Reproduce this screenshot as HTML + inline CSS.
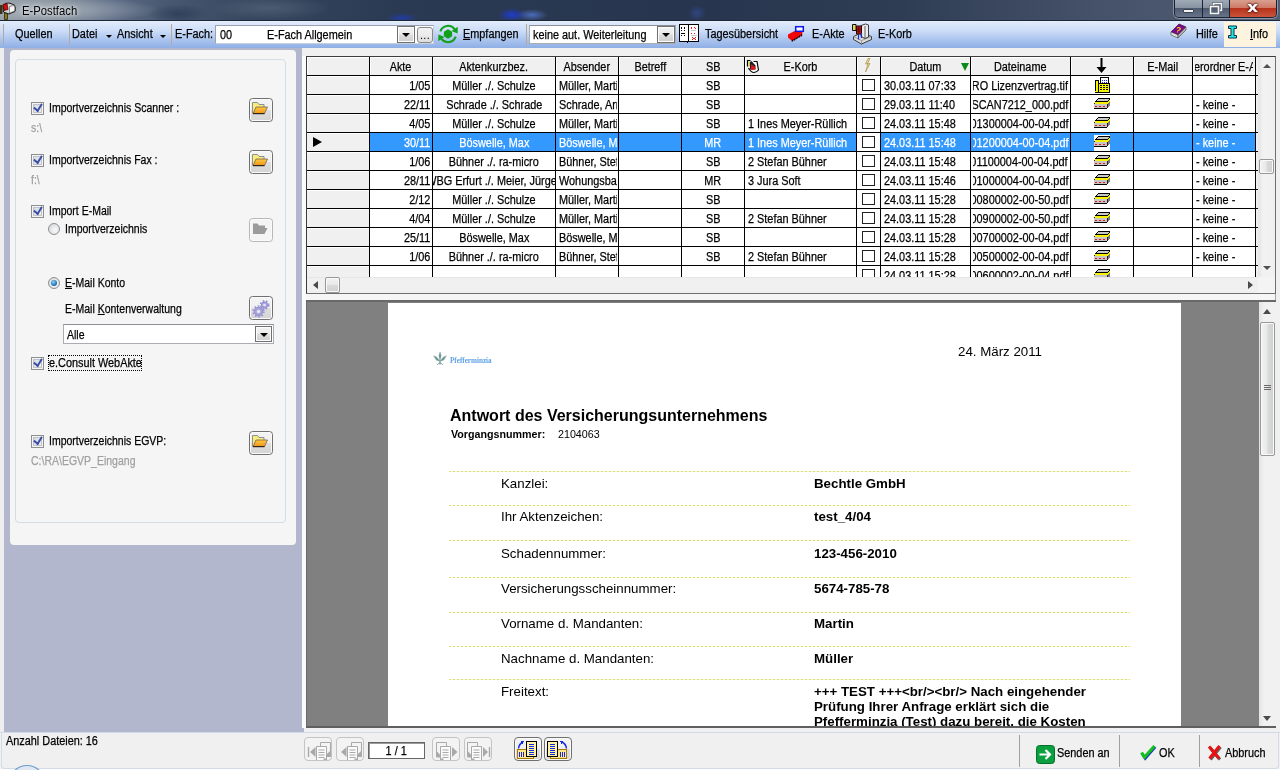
<!DOCTYPE html>
<html lang="de">
<head>
<meta charset="utf-8">
<title>E-Postfach</title>
<style>
*{box-sizing:border-box;margin:0;padding:0}
html,body{width:1280px;height:770px;overflow:hidden}
body{position:relative;background:#f0f0f0;font-family:"Liberation Sans",sans-serif;font-size:12px;color:#000;line-height:1}
.a{position:absolute}
.t{position:absolute;white-space:nowrap;line-height:14px;height:14px}
u{text-decoration:underline}
.tb{font-size:12.5px}
.s,.sc,.sr{-webkit-text-stroke:.25px currentColor}
.s{display:inline-block;transform:scaleX(.87);transform-origin:0 50%}
.sc{display:inline-block;transform:scaleX(.87);transform-origin:50% 50%}
.sr{display:inline-block;transform:scaleX(.87);transform-origin:100% 50%}
.lp{font-size:12.5px}
.lp .s{transform:scaleX(.84)}
.g{color:#a0a0a0}
.cb{width:13px;height:13px;border:1px solid #8e8f8f;background:linear-gradient(135deg,#d4d6da,#f4f4f4);box-shadow:inset 0 0 0 1px #f4f4f4,inset 0 0 0 2px #c0c4ca}
.cb:after{content:"";position:absolute;left:3px;top:-1px;width:4px;height:7px;border:solid #3a4fa8;border-width:0 2px 2px 0;transform:rotate(40deg) skewX(8deg)}
.rb{width:12px;height:12px;border-radius:50%;border:1px solid #8e8f8f;background:radial-gradient(circle at 60% 60%,#fafafa,#cfd2d6)}
.rb.on:after{content:"";position:absolute;left:2px;top:2px;width:6px;height:6px;border-radius:50%;background:radial-gradient(circle at 40% 35%,#8fd6f5,#1c76b8 60%,#0c4a86)}
.fbtn{width:24px;height:24px;border:1px solid #707070;border-radius:3.5px;background:linear-gradient(#f4f4f4 0,#efefef 48%,#dedede 52%,#d4d4d4 100%);box-shadow:inset 0 0 0 1px #fafafa}
.fbtn svg{position:absolute;left:2px;top:3px}
.fbtn.dis{border-color:#b8b8b8;background:#f4f4f4}
.gc{font-size:12.5px}
.c{text-align:center}
.hl{left:307px;width:951px;height:1px;background:#000}
.vl{top:57px;width:1px;height:220px;background:#000}
.chk{width:13px;height:12px;border:1px solid #222;background:#fff}
.pv{font-size:13.300px;line-height:16px;height:16px}
.b{font-weight:bold}
.dl{left:449px;width:681px;height:1px;background:repeating-linear-gradient(90deg,#dcdc7c 0,#dcdc7c 2.5px,#f4f4cf 2.5px,#f4f4cf 4px)}
.nb{width:28px;height:24px;border:1px solid #c4c4c4;border-radius:4px;background:#f3f3f3}
.nb svg{position:absolute;left:0;top:0}
.nb.on{border-color:#707070;background:linear-gradient(#f4f4f4 0,#efefef 48%,#dedede 52%,#d4d4d4 100%);box-shadow:inset 0 0 0 1px #fafafa}
.arr{width:0;height:0;border-left:3px solid transparent;border-right:3px solid transparent;border-top:3px solid #000}
.ddb{width:18px;height:17px;border:1px solid #707070;background:linear-gradient(#f2f2f2 0,#ebebeb 48%,#dddddd 52%,#cfcfcf 100%);box-shadow:inset 0 0 0 1px #fcfcfc}
.ddb:after{content:"";position:absolute;left:4px;top:6px;border-left:4px solid transparent;border-right:4px solid transparent;border-top:4px solid #000}
</style>
</head>
<body>
<div id="root" style="position:absolute;left:0;top:0;width:1280px;height:770px;will-change:transform;overflow:hidden">
<!-- title bar -->
<div class="a" id="titlebar" style="left:0;top:0;width:1280px;height:21px;background:
radial-gradient(ellipse 16px 5px at 402px 18px,rgba(30,60,200,.7),rgba(30,60,200,0) 100%),
radial-gradient(ellipse 14px 7px at 512px 15px,rgba(30,60,210,.95),rgba(30,60,210,0) 100%),
radial-gradient(ellipse 16px 6px at 532px 15px,rgba(90,130,230,.7),rgba(90,130,230,0) 100%),
radial-gradient(ellipse 9px 8px at 697px 13px,rgba(60,90,190,.45),rgba(60,90,190,0) 100%),
radial-gradient(ellipse 30px 10px at 178px 14px,rgba(30,45,75,.55),rgba(30,45,75,0) 100%),
radial-gradient(ellipse 60px 12px at 270px 8px,rgba(120,135,155,.35),rgba(120,135,155,0) 100%),
radial-gradient(ellipse 120px 14px at 40px 10px,rgba(175,183,191,.9),rgba(175,183,191,0) 100%),
linear-gradient(90deg,#8f99a3 0px,#7f8b98 60px,#62718a 105px,#4a5a72 160px,#36465e 250px,#2b3a53 400px,#27354e 700px,#2e3c54 900px,#45526a 1100px,#525e73 1280px)"></div>
<div class="a" style="left:0;top:20px;width:1280px;height:1px;background:#1d2738"></div>
<div class="a" style="left:0;top:21px;width:1280px;height:1px;background:#e4eefb"></div>
<div class="t" style="left:22px;top:4px;font-size:12px;color:#000;transform:scaleX(.94);transform-origin:0 0;text-shadow:0 0 6px rgba(255,255,255,.8),0 0 3px rgba(255,255,255,.5)">E-Postfach</div>
<!-- app icon -->
<svg class="a" style="left:0;top:1px" width="17" height="19" viewBox="0 0 17 19">
<path d="M0 4 h2.500 v9 h-2.500 z" fill="#3a3418"/>
<path d="M4.500 12 h3 v6.500 h-3 z" fill="#8a7a20" stroke="#2a2408" stroke-width=".8"/>
<path d="M3 4.500 Q5 1.500 9 2 L14.500 4 Q16 7 15 10.500 L9 13 L3.500 11 Z" fill="#d4d4d4" stroke="#1a1a1a" stroke-width="1"/>
<path d="M9.500 5.500 L14.300 4.500 Q15.300 7.500 14.500 10 L9.500 12 Z" fill="#f6f6f6" stroke="#555" stroke-width=".6"/>
<path d="M3 3.500 L7 2.500 L8 8.500 L4 9.500 Z" fill="#d80c0c" stroke="#3a0000" stroke-width=".7"/>
</svg>
<!-- window buttons -->
<div class="a" style="left:1174px;top:0;width:103px;height:18px;border:1px solid #1a2333;border-top:0;border-radius:0 0 5px 5px;overflow:hidden;box-shadow:0 0 0 1px rgba(255,255,255,.35)">
 <div class="a" style="left:0;top:0;width:28px;height:17px;background:linear-gradient(#a0aab6 0,#8893a2 45%,#4e5b6f 50%,#66738a 100%);border-right:1px solid #1a2333"></div>
 <div class="a" style="left:28px;top:0;width:27px;height:17px;background:linear-gradient(#a0aab6 0,#8893a2 45%,#4e5b6f 50%,#66738a 100%);border-right:1px solid #1a2333"></div>
 <div class="a" style="left:55px;top:0;width:47px;height:17px;background:linear-gradient(#d9a090 0,#cf7a66 45%,#b8321c 50%,#c9553a 100%)"></div>
 <div class="a" style="left:8px;top:9px;width:11px;height:4px;background:#f4f4f4;border:1px solid #3a4354;border-radius:1px"></div>
 <svg class="a" style="left:34px;top:2px" width="14" height="13" viewBox="0 0 14 13"><path d="M4.5 1.5h8v7h-3v-4h-5z" fill="none" stroke="#3a4354" stroke-width="2.6"/><path d="M4.5 1.5h8v7h-3v-4h-5z" fill="none" stroke="#f4f4f4" stroke-width="1.700"/><rect x="1.5" y="4.5" width="8" height="7" fill="none" stroke="#3a4354" stroke-width="2.6"/><rect x="1.5" y="4.5" width="8" height="7" fill="none" stroke="#f4f4f4" stroke-width="1.700"/></svg>
 <div class="t" style="left:72px;top:0px;font-size:14px;font-weight:bold;color:#fff;text-shadow:0 0 2px #400,0 0 2px #400;font-family:'DejaVu Sans',sans-serif;transform:scaleX(1.25);transform-origin:0 0">x</div>
</div>
<!-- toolbar -->
<div class="a" id="toolbar" style="left:0;top:22px;width:1280px;height:26px;background:linear-gradient(#dfeafb 0,#cfdff8 30%,#a9c3ee 70%,#8eafe5 100%)"></div>
<div class="a" style="left:3px;top:24px;width:1px;height:21px;background:#b5a99d"></div>
<div class="a" style="left:69px;top:24px;width:1px;height:21px;background:#b5a99d"></div>
<div class="a" style="left:171px;top:24px;width:1px;height:21px;background:#b5a99d"></div>
<div class="a" style="left:526px;top:24px;width:1px;height:21px;background:#b5a99d"></div>
<div class="t tb" style="top:27px;left:15px"><span class="s">Quellen</span></div>
<div class="t tb" style="top:27px;left:72px"><span class="s">Datei</span></div>
<div class="a arr" style="left:106px;top:35px"></div>
<div class="t tb" style="top:27px;left:117px"><span class="s">Ansicht</span></div>
<div class="a arr" style="left:160px;top:35px"></div>
<div class="t tb" style="top:27px;left:175px"><span class="s">E-Fach:</span></div>
<!-- combo 1 -->
<div class="a" style="left:215px;top:25px;width:219px;height:19px;background:#fff;border:1px solid #c6cfdf;border-top-color:#9aa2b2;border-left-color:#9aa2b2"></div>
<div class="t tb" style="top:28px;left:220px"><span class="s">00</span></div>
<div class="t tb" style="top:28px;left:267px"><span class="s">E-Fach Allgemein</span></div>
<div class="a ddb" style="left:397px;top:26px"></div>
<div class="a" style="left:417px;top:27px;width:16px;height:16px;border:1px solid #888;border-radius:3px;background:linear-gradient(#f2f2f2 0,#ebebeb 50%,#dcdcdc 100%)"></div>
<div class="t" style="left:420px;top:28px;font-size:11px;letter-spacing:.3px">...</div>
<!-- Empfangen icon -->
<svg class="a" style="left:437px;top:24px" width="22" height="20" viewBox="0 0 22 20">
<path d="M11 5.300l4.100 2.350v4.700l-4.100 2.350-4.100-2.350v-4.700z" fill="#10a01a"/>
<path d="M3.300 7.400 A8.200 8.200 0 0 1 17.700 5.300" fill="none" stroke="#10a01a" stroke-width="2"/>
<path d="M20.800 2.800 L14.600 7 L20.600 9.600 Z" fill="#10a01a"/>
<path d="M18.700 12.600 A8.200 8.200 0 0 1 4.300 14.700" fill="none" stroke="#10a01a" stroke-width="2"/>
<path d="M1.200 17.200 L7.400 13 L1.400 10.400 Z" fill="#10a01a"/>
</svg>
<div class="t tb" style="top:27px;left:463px"><span class="s"><u>E</u>mpfangen</span></div>
<!-- combo 2 -->
<div class="a" style="left:529px;top:25px;width:147px;height:19px;background:#fff;border:1px solid #abadb3;border-top-color:#8e8f94"></div>
<div class="t tb" style="top:28px;left:533px"><span class="s">keine aut. Weiterleitung</span></div>
<div class="a ddb" style="left:657px;top:26px"></div>
<!-- Tagesuebersicht icon -->
<svg class="a" style="left:679px;top:24px" width="20" height="19" viewBox="0 0 20 19" shape-rendering="crispEdges">
<rect x="0" y="0" width="20" height="18" fill="#000"/><rect x="1" y="1" width="8" height="16" fill="#fff"/><rect x="10" y="1" width="9" height="16" fill="#fff"/><rect x="8" y="17" width="1" height="2" fill="#000"/>
<path d="M2 3h1v2h-1zM5 3h1v2h-1zM2 6h1v1h-1zM5 6h1v1h-1zM2 9h4v1h-4zM2 11h1v1h-1zM5 11h1v1h-1z" fill="#000"/>
<path d="M12 3h1v2h-1zM15 3h1v1h-1zM16 4h1v1h-1zM12 9h1v1h-1zM15 9h1v1h-1zM13 13h1v1h-1zM16 13h1v1h-1zM14 14h2v1h-2zM13 15h1v1h-1zM16 15h1v1h-1z" fill="#f01010"/>
<path d="M12 6h5v1h-5zM12 11h6v1h-6z" fill="#c8c8c8"/>
</svg>
<div class="t tb" style="top:27px;left:705px"><span class="s">Tagesübersicht</span></div>
<!-- E-Akte icon -->
<svg class="a" style="left:787px;top:25px" width="18" height="18" viewBox="0 0 18 18">
<path d="M1 9.500 L8.500 5.500 L15.500 7 L15 10 L5 16 L1 12.500 Z" fill="#f00808"/>
<path d="M5 16.500l1.200-2M7.200 15.300l1.200-2M9.400 14l1.200-2M11.600 12.700l1.200-2M13.800 11.400l1.200-2" stroke="#200000" stroke-width="1.300"/>
<rect x="8.700" y="1.700" width="7.600" height="4.600" fill="#fff" stroke="#1018e8" stroke-width="1.500"/>
</svg>
<div class="t tb" style="top:27px;left:812px"><span class="s">E-Akte</span></div>
<!-- E-Korb icon -->
<svg class="a" style="left:851px;top:23px" width="22" height="22" viewBox="0 0 22 22">
<path d="M2.500 13.500 L10 10 L20.500 13.500 L20.500 16.500 L10.500 21 L2.500 16.500 Z" fill="#dcdcdc" stroke="#2a2a2a" stroke-width=".9"/>
<path d="M2.500 13.500 L10.500 17.500 L20.500 13.500 M10.500 17.500 V21" fill="none" stroke="#8a8a8a" stroke-width=".8"/>
<path d="M10 2.500 L14.500 1 L17.500 2 L17.500 14 L14 15.500 L10 13.500 Z" fill="#ececec" stroke="#2a2a2a" stroke-width=".9"/>
<path d="M14 3v12" stroke="#555" stroke-width=".9"/>
<path d="M1.500 1.500 h3.500 v6 h-3.500 z" fill="#e8d860" stroke="#111" stroke-width="1"/>
<path d="M5.500 3 h5 v8 h-5 z" fill="#e01010" stroke="#111" stroke-width="1"/>
<path d="M7 5h2M7 7h2M7 9h2M7 5v4M9.300 5.500v1M9.300 7.500v1" stroke="#400" stroke-width=".8" fill="none"/>
<path d="M7.500 12v4.500M10.500 10v5" stroke="#1030e8" stroke-width="1.200"/>
</svg>
<div class="t tb" style="top:27px;left:878px"><span class="s">E-Korb</span></div>
<!-- Hilfe -->
<svg class="a" style="left:1170px;top:23px" width="17" height="16" viewBox="0 0 17 16">
<path d="M1 9 L9 1 L16 4 L8 12 Z" fill="#7a0a8a" stroke="#3a0440" stroke-width=".7"/>
<path d="M1 9 L8 12 L8 15 L1 12 Z" fill="#e8e8e8" stroke="#555" stroke-width=".7"/>
<path d="M8 12 L16 4 L16 7 L8 15 Z" fill="#b0b0b0" stroke="#555" stroke-width=".7"/>
<text x="6" y="9.500" font-size="8" font-weight="bold" fill="#ffe000" font-family="Liberation Sans,sans-serif" transform="rotate(18 8 7)">?</text>
</svg>
<div class="t tb" style="top:27px;left:1196px"><span class="s">Hilfe</span></div>
<div class="a" style="left:1224px;top:22px;width:52px;height:25px;background:#fdf3df"></div>
<svg class="a" style="left:1227px;top:25px" width="11" height="14" viewBox="0 0 11 14">
<path d="M1.500 1h8v2.500h-2.500v7h2.500v2.500h-8v-2.500h2.500v-7h-2.500z" fill="#20e8e8" stroke="#103040" stroke-width="1"/>
</svg>
<div class="t tb" style="top:27px;left:1250px"><span class="s"><u>I</u>nfo</span></div>
<!-- left panel -->
<div class="a" style="left:0;top:48px;width:304px;height:684px;background:#b3b7cd"></div>
<div class="a" style="left:0;top:48px;width:4px;height:684px;background:#eeeef0"></div>
<div class="a" style="left:302px;top:48px;width:978px;height:684px;background:#f0f0f0"></div>
<div class="a" style="left:302px;top:56px;width:4px;height:676px;background:#fafbfc"></div>
<div class="a" style="left:10px;top:50px;width:286px;height:495px;background:#f5f5f5;border-radius:4px"></div>
<div class="a" style="left:15px;top:59px;width:271px;height:464px;border:1px solid #d3dde6;border-radius:4px"></div>
<!-- row 1 -->
<div class="a cb" style="left:31px;top:102px"></div>
<div class="t lp" style="left:49px;top:101px"><span class="s">Importverzeichnis Scanner :</span></div>
<div class="a fbtn" style="left:249px;top:98px"><svg width="16" height="13" viewBox="0 0 16 13"><g><path d="M.5 11.500V.5h5l1.500 2h5v3" fill="#f9ec7a" stroke="#808694" stroke-width=".9"/><path d="M1 11.500 L4 5h11.500L12.500 11.500z" fill="url(#fg)" stroke="#6e6258" stroke-width=".8"/><path d="M1 11.700h11.500" stroke="#1a1208" stroke-width="1"/></g></svg></div>
<div class="t lp g" style="left:31px;top:121px"><span class="s">s:\</span></div>
<!-- row 2 -->
<div class="a cb" style="left:31px;top:154px"></div>
<div class="t lp" style="left:49px;top:153px"><span class="s">Importverzeichnis Fax :</span></div>
<div class="a fbtn" style="left:249px;top:150px"><svg width="16" height="13" viewBox="0 0 16 13"><g><path d="M.5 11.500V.5h5l1.500 2h5v3" fill="#f9ec7a" stroke="#808694" stroke-width=".9"/><path d="M1 11.500 L4 5h11.500L12.500 11.500z" fill="url(#fg)" stroke="#6e6258" stroke-width=".8"/><path d="M1 11.700h11.500" stroke="#1a1208" stroke-width="1"/></g></svg></div>
<div class="t lp g" style="left:31px;top:173px"><span class="s">f:\</span></div>
<!-- row 3 -->
<div class="a cb" style="left:31px;top:205px"></div>
<div class="t lp" style="left:49px;top:204px"><span class="s">Import E-Mail</span></div>
<div class="a rb" style="left:48px;top:223px"></div>
<div class="t lp" style="left:65px;top:222px"><span class="s">Importverzeichnis</span></div>
<div class="a fbtn dis" style="left:249px;top:218px"><svg width="16" height="13" viewBox="0 0 16 13"><path d="M1 12V1.500h4.500l1.500 2h6v2.500h2.500l-3 6z" fill="#9b9b9b"/></svg></div>
<div class="a rb on" style="left:48px;top:277px"></div>
<div class="t lp" style="left:65px;top:276px"><span class="s"><u>E</u>-Mail Konto</span></div>
<div class="t lp" style="left:65px;top:302px"><span class="s">E-Mail <u>K</u>ontenverwaltung</span></div>
<div class="a fbtn" style="left:249px;top:296px"><svg width="18" height="18" viewBox="0 0 18 18">
<g fill="#a9a5dc" stroke="#7d78c0" stroke-width=".7"><circle cx="6.500" cy="11.500" r="4.200"/><circle cx="12.500" cy="5" r="3.200"/></g>
<g stroke="#9b96d6" stroke-width="2" stroke-dasharray="1.600 1.700" fill="none"><circle cx="6.500" cy="11.500" r="5.200"/><circle cx="12.500" cy="5" r="4"/></g>
<circle cx="6.500" cy="11.500" r="1.700" fill="#e8e8f4"/><circle cx="12.500" cy="5" r="1.300" fill="#e8e8f4"/></svg></div>
<div class="a" style="left:63px;top:324px;width:211px;height:20px;background:#fff;border:1px solid #abadb3;border-top-color:#8e8f94"></div>
<div class="t lp" style="left:67px;top:328px"><span class="s">Alle</span></div>
<div class="a ddb" style="left:255px;top:326px;height:16px;width:17px"></div>
<!-- row 4 -->
<div class="a cb" style="left:31px;top:357px"></div>
<div class="a" style="left:48px;top:355px;width:94px;height:16px;border:1px dotted #000"></div>
<div class="t lp" style="left:49px;top:356px"><span class="s" style="transform:scaleX(.87)">e.Consult WebAkte</span></div>
<!-- row 5 -->
<div class="a cb" style="left:31px;top:435px"></div>
<div class="t lp" style="left:49px;top:434px"><span class="s">Importverzeichnis EGVP:</span></div>
<div class="a fbtn" style="left:249px;top:431px"><svg width="16" height="13" viewBox="0 0 16 13"><g><path d="M.5 11.500V.5h5l1.500 2h5v3" fill="#f9ec7a" stroke="#808694" stroke-width=".9"/><path d="M1 11.500 L4 5h11.500L12.500 11.500z" fill="url(#fg)" stroke="#6e6258" stroke-width=".8"/><path d="M1 11.700h11.500" stroke="#1a1208" stroke-width="1"/></g></svg></div>
<div class="t lp g" style="left:31px;top:454px"><span class="s">C:\RA\EGVP_Eingang</span></div>
<svg width="0" height="0" style="position:absolute"><defs>
<linearGradient id="fg" x1="0" y1="0" x2="0" y2="1"><stop offset="0" stop-color="#ffc840"/><stop offset="1" stop-color="#f09418"/></linearGradient>
</defs></svg>
<!-- grid -->
<div class="a" id="grid" style="left:306px;top:56px;width:970px;height:238px;background:#fff;border:1px solid #3c3c3c;border-right-color:#707070;border-bottom-color:#707070;overflow:hidden"></div>
<div class="a" style="left:307px;top:57px;width:948px;height:18px;background:#f0f0f0"></div>
<div class="a" style="left:307px;top:57px;width:62px;height:220px;background:#f0f0f0"></div>
<div class="a" style="left:1256px;top:57px;width:19px;height:220px;background:#f0f0f0"></div>
<div class="a" style="left:370px;top:133px;width:885px;height:18px;background:#3399ff"></div>
<div class="a" style="left:857px;top:133px;width:23px;height:18px;background:#fff"></div>
<div class="a" style="left:307px;top:57px;width:62px;height:1px;background:#fff"></div>
<div class="a" style="left:307px;top:57px;width:1px;height:18px;background:#fff"></div>
<div class="a" style="left:370px;top:57px;width:62px;height:1px;background:#fff"></div>
<div class="a" style="left:370px;top:57px;width:1px;height:18px;background:#fff"></div>
<div class="a" style="left:433px;top:57px;width:122px;height:1px;background:#fff"></div>
<div class="a" style="left:433px;top:57px;width:1px;height:18px;background:#fff"></div>
<div class="a" style="left:556px;top:57px;width:62px;height:1px;background:#fff"></div>
<div class="a" style="left:556px;top:57px;width:1px;height:18px;background:#fff"></div>
<div class="a" style="left:619px;top:57px;width:62px;height:1px;background:#fff"></div>
<div class="a" style="left:619px;top:57px;width:1px;height:18px;background:#fff"></div>
<div class="a" style="left:682px;top:57px;width:62px;height:1px;background:#fff"></div>
<div class="a" style="left:682px;top:57px;width:1px;height:18px;background:#fff"></div>
<div class="a" style="left:745px;top:57px;width:111px;height:1px;background:#fff"></div>
<div class="a" style="left:745px;top:57px;width:1px;height:18px;background:#fff"></div>
<div class="a" style="left:857px;top:57px;width:23px;height:1px;background:#fff"></div>
<div class="a" style="left:857px;top:57px;width:1px;height:18px;background:#fff"></div>
<div class="a" style="left:881px;top:57px;width:89px;height:1px;background:#fff"></div>
<div class="a" style="left:881px;top:57px;width:1px;height:18px;background:#fff"></div>
<div class="a" style="left:971px;top:57px;width:99px;height:1px;background:#fff"></div>
<div class="a" style="left:971px;top:57px;width:1px;height:18px;background:#fff"></div>
<div class="a" style="left:1071px;top:57px;width:62px;height:1px;background:#fff"></div>
<div class="a" style="left:1071px;top:57px;width:1px;height:18px;background:#fff"></div>
<div class="a" style="left:1134px;top:57px;width:58px;height:1px;background:#fff"></div>
<div class="a" style="left:1134px;top:57px;width:1px;height:18px;background:#fff"></div>
<div class="a" style="left:1193px;top:57px;width:62px;height:1px;background:#fff"></div>
<div class="a" style="left:1193px;top:57px;width:1px;height:18px;background:#fff"></div>
<div class="a" style="left:307px;top:76px;width:62px;height:1px;background:#fff"></div>
<div class="a" style="left:307px;top:95px;width:62px;height:1px;background:#fff"></div>
<div class="a" style="left:307px;top:114px;width:62px;height:1px;background:#fff"></div>
<div class="a" style="left:307px;top:133px;width:62px;height:1px;background:#fff"></div>
<div class="a" style="left:307px;top:152px;width:62px;height:1px;background:#fff"></div>
<div class="a" style="left:307px;top:171px;width:62px;height:1px;background:#fff"></div>
<div class="a" style="left:307px;top:190px;width:62px;height:1px;background:#fff"></div>
<div class="a" style="left:307px;top:209px;width:62px;height:1px;background:#fff"></div>
<div class="a" style="left:307px;top:228px;width:62px;height:1px;background:#fff"></div>
<div class="a" style="left:307px;top:247px;width:62px;height:1px;background:#fff"></div>
<div class="a" style="left:307px;top:266px;width:62px;height:1px;background:#fff"></div>
<div class="a hl" style="top:75px"></div>
<div class="a hl" style="top:94px"></div>
<div class="a hl" style="top:113px"></div>
<div class="a hl" style="top:132px"></div>
<div class="a hl" style="top:151px"></div>
<div class="a hl" style="top:170px"></div>
<div class="a hl" style="top:189px"></div>
<div class="a hl" style="top:208px"></div>
<div class="a hl" style="top:227px"></div>
<div class="a hl" style="top:246px"></div>
<div class="a hl" style="top:265px"></div>
<div class="a vl" style="left:369px"></div>
<div class="a vl" style="left:432px"></div>
<div class="a vl" style="left:555px"></div>
<div class="a vl" style="left:618px"></div>
<div class="a vl" style="left:681px"></div>
<div class="a vl" style="left:744px"></div>
<div class="a vl" style="left:856px"></div>
<div class="a vl" style="left:880px"></div>
<div class="a vl" style="left:970px"></div>
<div class="a vl" style="left:1070px"></div>
<div class="a vl" style="left:1133px"></div>
<div class="a vl" style="left:1192px"></div>
<div class="a vl" style="left:1255px"></div>
<div class="t gc c" style="left:370px;top:60px;width:62px"><span class="sc">Akte</span></div>
<div class="t gc c" style="left:433px;top:60px;width:122px"><span class="sc">Aktenkurzbez.</span></div>
<div class="t gc c" style="left:556px;top:60px;width:62px"><span class="sc">Absender</span></div>
<div class="t gc c" style="left:619px;top:60px;width:62px"><span class="sc">Betreff</span></div>
<div class="t gc c" style="left:682px;top:60px;width:62px"><span class="sc">SB</span></div>
<div class="t gc c" style="left:745px;top:60px;width:111px"><span class="sc">E-Korb</span></div>
<div class="t gc c" style="left:881px;top:60px;width:89px"><span class="sc">Datum</span></div>
<div class="t gc c" style="left:971px;top:60px;width:99px"><span class="sc">Dateiname</span></div>
<div class="t gc c" style="left:1134px;top:60px;width:58px"><span class="sc">E-Mail</span></div>
<div class="t gc" style="left:1195px;top:60px;width:58px;overflow:hidden;display:flex;justify-content:center"><span class="sc" style="flex:none">Unterordner E-Akte</span></div>
<svg class="a" style="left:746px;top:59px" width="14" height="15" viewBox="0 0 14 15"><path d="M6.500 2.500h4.500l1.500 8.500q-1.500 2.500-4.500 2.500q-3.500 0-5.500-4.500z" fill="#fff"/><path d="M1.500 7.500v-6h3M2.500 9q2.500 4.500 5.500 4.500q3-.5 4.500-2.500l-1.500-8.500h-3.500" fill="none" stroke="#000" stroke-width="1.200"/><rect x="2.200" y="2.200" width="1.600" height="5.300" fill="#e6de5a"/><path d="M3.800 3.200l1.700-1.200l4 4.500v4h-5.500z" fill="#14202c"/><path d="M5 5.200l3.800 2.300l.8 3l-4.600.6z" fill="#e81010"/></svg>
<svg class="a" style="left:863px;top:58px" width="9" height="15" viewBox="0 0 9 15"><path d="M5 .5L2.500 6h2.500L2.500 14 7 5.500H4.500L7 .5z" fill="#f0d890" stroke="#a89048" stroke-width=".7"/></svg>
<div class="a" style="left:961px;top:63px;width:0;height:0;border-left:4px solid transparent;border-right:4px solid transparent;border-top:8px solid #0a8a1a"></div>
<svg class="a" style="left:1095px;top:58px" width="13" height="16" viewBox="0 0 13 16"><path d="M5.500 0h2v9h4l-5 6-5-6h4z" fill="#000"/></svg>
<div class="t gc" style="left:372px;top:79px;width:59px;padding-right:1px;overflow:hidden;display:flex;justify-content:flex-end"><span class="sr" style="flex:none">1/05</span></div>
<div class="t gc" style="left:433px;top:79px;width:122px;overflow:hidden;display:flex;justify-content:center"><span class="sc" style="flex:none">Müller ./. Schulze</span></div>
<div class="t gc" style="left:559px;top:79px;width:58px;overflow:hidden"><span class="s">Müller, Marti</span></div>
<div class="t gc" style="left:682px;top:79px;width:62px;overflow:hidden;display:flex;justify-content:center"><span class="sc" style="flex:none">SB</span></div>
<div class="a chk" style="left:862px;top:79px"></div>
<div class="t gc" style="left:884px;top:79px;width:85px;overflow:hidden"><span class="s">30.03.11 07:33</span></div>
<div class="t gc" style="left:973px;top:79px;width:96px;padding-right:1px;overflow:hidden;display:flex;justify-content:flex-end"><span class="sr" style="flex:none">RA-MICRO Lizenzvertrag.tif</span></div>
<svg class="a" style="left:1094px;top:77px" width="16" height="16" viewBox="0 0 16 16"><g shape-rendering="crispEdges"><rect x="1" y="3" width="4" height="13" fill="#000"/><rect x="2" y="4" width="2" height="10" fill="#f6f200"/><rect x="1" y="14" width="3" height="1" fill="#f6f200"/><rect x="5" y="6" width="11" height="10" fill="#000"/><rect x="5" y="7" width="10" height="8" fill="#f6f200"/><rect x="6" y="0" width="9" height="7" fill="#000"/><rect x="7" y="1" width="7" height="5" fill="#fff"/><path d="M8 3h1v1h-1zM10 3h1v1h-1zM12 3h1v1h-1zM8 5h1v1h-1zM10 5h1v1h-1zM12 5h1v1h-1z" fill="#1020f0"/><path d="M6 8h2v1h-2zM9 8h2v1h-2zM12 8h2v1h-2zM6 10h2v1h-2zM9 10h2v1h-2zM12 10h2v1h-2zM6 12h2v1h-2zM9 12h2v1h-2zM12 12h2v1h-2z" fill="#111"/></g></svg>
<div class="t gc" style="left:372px;top:98px;width:59px;padding-right:1px;overflow:hidden;display:flex;justify-content:flex-end"><span class="sr" style="flex:none">22/11</span></div>
<div class="t gc" style="left:433px;top:98px;width:122px;overflow:hidden;display:flex;justify-content:center"><span class="sc" style="flex:none">Schrade ./. Schrade</span></div>
<div class="t gc" style="left:559px;top:98px;width:58px;overflow:hidden"><span class="s">Schrade, Armin</span></div>
<div class="t gc" style="left:682px;top:98px;width:62px;overflow:hidden;display:flex;justify-content:center"><span class="sc" style="flex:none">SB</span></div>
<div class="a chk" style="left:862px;top:98px"></div>
<div class="t gc" style="left:884px;top:98px;width:85px;overflow:hidden"><span class="s">29.03.11 11:40</span></div>
<div class="t gc" style="left:973px;top:98px;width:96px;padding-right:1px;overflow:hidden;display:flex;justify-content:flex-end"><span class="sr" style="flex:none">SCAN7212_000.pdf</span></div>
<svg class="a" style="left:1094px;top:98px" width="16" height="11" viewBox="0 0 16 11"><g shape-rendering="crispEdges"><path d="M4 0h12v1l-3 3h-12v-1z" fill="#c9c9c9"/><path d="M4 0h12v1h-12z" fill="#000"/><path d="M4 1l-3 3h-1l3-3z" fill="#000"/><path d="M1 3h12v1h-12z" fill="#000"/><path d="M1 4h12l3-3v2l-3 3h-12z" fill="#f6f200"/><path d="M13 3l3-3v1l-3 3z" fill="#000"/><path d="M0 6h13v4h-13z" fill="#c6c6c6"/><path d="M13 6l3-3v4l-3 3z" fill="#7a7a7a"/><path d="M0 5h1v1h-1zM13 6h1v4h-1z" fill="#222"/><path d="M0 10h13v1h-13z" fill="#000"/><path d="M1 8h2v1h-2zM5 8h2v1h-2zM9 8h2v1h-2z" fill="#f01010"/></g></svg>
<div class="t gc" style="left:1196px;top:98px;width:58px;overflow:hidden"><span class="s">- keine -</span></div>
<div class="t gc" style="left:372px;top:117px;width:59px;padding-right:1px;overflow:hidden;display:flex;justify-content:flex-end"><span class="sr" style="flex:none">4/05</span></div>
<div class="t gc" style="left:433px;top:117px;width:122px;overflow:hidden;display:flex;justify-content:center"><span class="sc" style="flex:none">Müller ./. Schulze</span></div>
<div class="t gc" style="left:559px;top:117px;width:58px;overflow:hidden"><span class="s">Müller, Martin</span></div>
<div class="t gc" style="left:682px;top:117px;width:62px;overflow:hidden;display:flex;justify-content:center"><span class="sc" style="flex:none">SB</span></div>
<div class="t gc" style="left:748px;top:117px;width:107px;overflow:hidden"><span class="s">1 Ines Meyer-Rüllich</span></div>
<div class="a chk" style="left:862px;top:117px"></div>
<div class="t gc" style="left:884px;top:117px;width:85px;overflow:hidden"><span class="s">24.03.11 15:48</span></div>
<div class="t gc" style="left:973px;top:117px;width:96px;padding-right:1px;overflow:hidden;display:flex;justify-content:flex-end"><span class="sr" style="flex:none">00001300004-00-04.pdf</span></div>
<svg class="a" style="left:1094px;top:117px" width="16" height="11" viewBox="0 0 16 11"><g shape-rendering="crispEdges"><path d="M4 0h12v1l-3 3h-12v-1z" fill="#c9c9c9"/><path d="M4 0h12v1h-12z" fill="#000"/><path d="M4 1l-3 3h-1l3-3z" fill="#000"/><path d="M1 3h12v1h-12z" fill="#000"/><path d="M1 4h12l3-3v2l-3 3h-12z" fill="#f6f200"/><path d="M13 3l3-3v1l-3 3z" fill="#000"/><path d="M0 6h13v4h-13z" fill="#c6c6c6"/><path d="M13 6l3-3v4l-3 3z" fill="#7a7a7a"/><path d="M0 5h1v1h-1zM13 6h1v4h-1z" fill="#222"/><path d="M0 10h13v1h-13z" fill="#000"/><path d="M1 8h2v1h-2zM5 8h2v1h-2zM9 8h2v1h-2z" fill="#f01010"/></g></svg>
<div class="t gc" style="left:1196px;top:117px;width:58px;overflow:hidden"><span class="s">- keine -</span></div>
<div class="t gc" style="left:372px;top:136px;width:59px;padding-right:1px;overflow:hidden;display:flex;justify-content:flex-end;color:#fff"><span class="sr" style="flex:none">30/11</span></div>
<div class="t gc" style="left:433px;top:136px;width:122px;overflow:hidden;display:flex;justify-content:center;color:#fff"><span class="sc" style="flex:none">Böswelle, Max</span></div>
<div class="t gc" style="left:559px;top:136px;width:58px;overflow:hidden;color:#fff"><span class="s">Böswelle, Max</span></div>
<div class="t gc" style="left:682px;top:136px;width:62px;overflow:hidden;display:flex;justify-content:center;color:#fff"><span class="sc" style="flex:none">MR</span></div>
<div class="t gc" style="left:748px;top:136px;width:107px;overflow:hidden;color:#fff"><span class="s">1 Ines Meyer-Rüllich</span></div>
<div class="a chk" style="left:862px;top:136px"></div>
<div class="t gc" style="left:884px;top:136px;width:85px;overflow:hidden;color:#fff"><span class="s">24.03.11 15:48</span></div>
<div class="t gc" style="left:973px;top:136px;width:96px;padding-right:1px;overflow:hidden;display:flex;justify-content:flex-end;color:#fff"><span class="sr" style="flex:none">00001200004-00-04.pdf</span></div>
<div class="a" style="left:1094px;top:135px;width:16px;height:16px;background:#fff"></div>
<svg class="a" style="left:1094px;top:136px" width="16" height="11" viewBox="0 0 16 11"><g shape-rendering="crispEdges"><path d="M4 0h12v1l-3 3h-12v-1z" fill="#c9c9c9"/><path d="M4 0h12v1h-12z" fill="#000"/><path d="M4 1l-3 3h-1l3-3z" fill="#000"/><path d="M1 3h12v1h-12z" fill="#000"/><path d="M1 4h12l3-3v2l-3 3h-12z" fill="#f6f200"/><path d="M13 3l3-3v1l-3 3z" fill="#000"/><path d="M0 6h13v4h-13z" fill="#c6c6c6"/><path d="M13 6l3-3v4l-3 3z" fill="#7a7a7a"/><path d="M0 5h1v1h-1zM13 6h1v4h-1z" fill="#222"/><path d="M0 10h13v1h-13z" fill="#000"/><path d="M1 8h2v1h-2zM5 8h2v1h-2zM9 8h2v1h-2z" fill="#f01010"/></g></svg>
<div class="t gc" style="left:1196px;top:136px;width:58px;overflow:hidden;color:#fff"><span class="s">- keine -</span></div>
<div class="t gc" style="left:372px;top:155px;width:59px;padding-right:1px;overflow:hidden;display:flex;justify-content:flex-end"><span class="sr" style="flex:none">1/06</span></div>
<div class="t gc" style="left:433px;top:155px;width:122px;overflow:hidden;display:flex;justify-content:center"><span class="sc" style="flex:none">Bühner ./. ra-micro</span></div>
<div class="t gc" style="left:559px;top:155px;width:58px;overflow:hidden"><span class="s">Bühner, Stefan</span></div>
<div class="t gc" style="left:682px;top:155px;width:62px;overflow:hidden;display:flex;justify-content:center"><span class="sc" style="flex:none">SB</span></div>
<div class="t gc" style="left:748px;top:155px;width:107px;overflow:hidden"><span class="s">2 Stefan Bühner</span></div>
<div class="a chk" style="left:862px;top:155px"></div>
<div class="t gc" style="left:884px;top:155px;width:85px;overflow:hidden"><span class="s">24.03.11 15:48</span></div>
<div class="t gc" style="left:973px;top:155px;width:96px;padding-right:1px;overflow:hidden;display:flex;justify-content:flex-end"><span class="sr" style="flex:none">00001100004-00-04.pdf</span></div>
<svg class="a" style="left:1094px;top:155px" width="16" height="11" viewBox="0 0 16 11"><g shape-rendering="crispEdges"><path d="M4 0h12v1l-3 3h-12v-1z" fill="#c9c9c9"/><path d="M4 0h12v1h-12z" fill="#000"/><path d="M4 1l-3 3h-1l3-3z" fill="#000"/><path d="M1 3h12v1h-12z" fill="#000"/><path d="M1 4h12l3-3v2l-3 3h-12z" fill="#f6f200"/><path d="M13 3l3-3v1l-3 3z" fill="#000"/><path d="M0 6h13v4h-13z" fill="#c6c6c6"/><path d="M13 6l3-3v4l-3 3z" fill="#7a7a7a"/><path d="M0 5h1v1h-1zM13 6h1v4h-1z" fill="#222"/><path d="M0 10h13v1h-13z" fill="#000"/><path d="M1 8h2v1h-2zM5 8h2v1h-2zM9 8h2v1h-2z" fill="#f01010"/></g></svg>
<div class="t gc" style="left:1196px;top:155px;width:58px;overflow:hidden"><span class="s">- keine -</span></div>
<div class="t gc" style="left:372px;top:174px;width:59px;padding-right:1px;overflow:hidden;display:flex;justify-content:flex-end"><span class="sr" style="flex:none">28/11</span></div>
<div class="t gc" style="left:433px;top:174px;width:122px;overflow:hidden;display:flex;justify-content:center"><span class="sc" style="flex:none">WBG Erfurt ./. Meier, Jürgen</span></div>
<div class="t gc" style="left:559px;top:174px;width:58px;overflow:hidden"><span class="s">Wohungsbau</span></div>
<div class="t gc" style="left:682px;top:174px;width:62px;overflow:hidden;display:flex;justify-content:center"><span class="sc" style="flex:none">MR</span></div>
<div class="t gc" style="left:748px;top:174px;width:107px;overflow:hidden"><span class="s">3 Jura Soft</span></div>
<div class="a chk" style="left:862px;top:174px"></div>
<div class="t gc" style="left:884px;top:174px;width:85px;overflow:hidden"><span class="s">24.03.11 15:46</span></div>
<div class="t gc" style="left:973px;top:174px;width:96px;padding-right:1px;overflow:hidden;display:flex;justify-content:flex-end"><span class="sr" style="flex:none">00001000004-00-04.pdf</span></div>
<svg class="a" style="left:1094px;top:174px" width="16" height="11" viewBox="0 0 16 11"><g shape-rendering="crispEdges"><path d="M4 0h12v1l-3 3h-12v-1z" fill="#c9c9c9"/><path d="M4 0h12v1h-12z" fill="#000"/><path d="M4 1l-3 3h-1l3-3z" fill="#000"/><path d="M1 3h12v1h-12z" fill="#000"/><path d="M1 4h12l3-3v2l-3 3h-12z" fill="#f6f200"/><path d="M13 3l3-3v1l-3 3z" fill="#000"/><path d="M0 6h13v4h-13z" fill="#c6c6c6"/><path d="M13 6l3-3v4l-3 3z" fill="#7a7a7a"/><path d="M0 5h1v1h-1zM13 6h1v4h-1z" fill="#222"/><path d="M0 10h13v1h-13z" fill="#000"/><path d="M1 8h2v1h-2zM5 8h2v1h-2zM9 8h2v1h-2z" fill="#f01010"/></g></svg>
<div class="t gc" style="left:1196px;top:174px;width:58px;overflow:hidden"><span class="s">- keine -</span></div>
<div class="t gc" style="left:372px;top:193px;width:59px;padding-right:1px;overflow:hidden;display:flex;justify-content:flex-end"><span class="sr" style="flex:none">2/12</span></div>
<div class="t gc" style="left:433px;top:193px;width:122px;overflow:hidden;display:flex;justify-content:center"><span class="sc" style="flex:none">Müller ./. Schulze</span></div>
<div class="t gc" style="left:559px;top:193px;width:58px;overflow:hidden"><span class="s">Müller, Martin</span></div>
<div class="t gc" style="left:682px;top:193px;width:62px;overflow:hidden;display:flex;justify-content:center"><span class="sc" style="flex:none">SB</span></div>
<div class="a chk" style="left:862px;top:193px"></div>
<div class="t gc" style="left:884px;top:193px;width:85px;overflow:hidden"><span class="s">24.03.11 15:28</span></div>
<div class="t gc" style="left:973px;top:193px;width:96px;padding-right:1px;overflow:hidden;display:flex;justify-content:flex-end"><span class="sr" style="flex:none">00000800002-00-50.pdf</span></div>
<svg class="a" style="left:1094px;top:193px" width="16" height="11" viewBox="0 0 16 11"><g shape-rendering="crispEdges"><path d="M4 0h12v1l-3 3h-12v-1z" fill="#c9c9c9"/><path d="M4 0h12v1h-12z" fill="#000"/><path d="M4 1l-3 3h-1l3-3z" fill="#000"/><path d="M1 3h12v1h-12z" fill="#000"/><path d="M1 4h12l3-3v2l-3 3h-12z" fill="#f6f200"/><path d="M13 3l3-3v1l-3 3z" fill="#000"/><path d="M0 6h13v4h-13z" fill="#c6c6c6"/><path d="M13 6l3-3v4l-3 3z" fill="#7a7a7a"/><path d="M0 5h1v1h-1zM13 6h1v4h-1z" fill="#222"/><path d="M0 10h13v1h-13z" fill="#000"/><path d="M1 8h2v1h-2zM5 8h2v1h-2zM9 8h2v1h-2z" fill="#f01010"/></g></svg>
<div class="t gc" style="left:1196px;top:193px;width:58px;overflow:hidden"><span class="s">- keine -</span></div>
<div class="t gc" style="left:372px;top:212px;width:59px;padding-right:1px;overflow:hidden;display:flex;justify-content:flex-end"><span class="sr" style="flex:none">4/04</span></div>
<div class="t gc" style="left:433px;top:212px;width:122px;overflow:hidden;display:flex;justify-content:center"><span class="sc" style="flex:none">Müller ./. Schulze</span></div>
<div class="t gc" style="left:559px;top:212px;width:58px;overflow:hidden"><span class="s">Müller, Martin</span></div>
<div class="t gc" style="left:682px;top:212px;width:62px;overflow:hidden;display:flex;justify-content:center"><span class="sc" style="flex:none">SB</span></div>
<div class="t gc" style="left:748px;top:212px;width:107px;overflow:hidden"><span class="s">2 Stefan Bühner</span></div>
<div class="a chk" style="left:862px;top:212px"></div>
<div class="t gc" style="left:884px;top:212px;width:85px;overflow:hidden"><span class="s">24.03.11 15:28</span></div>
<div class="t gc" style="left:973px;top:212px;width:96px;padding-right:1px;overflow:hidden;display:flex;justify-content:flex-end"><span class="sr" style="flex:none">00000900002-00-50.pdf</span></div>
<svg class="a" style="left:1094px;top:212px" width="16" height="11" viewBox="0 0 16 11"><g shape-rendering="crispEdges"><path d="M4 0h12v1l-3 3h-12v-1z" fill="#c9c9c9"/><path d="M4 0h12v1h-12z" fill="#000"/><path d="M4 1l-3 3h-1l3-3z" fill="#000"/><path d="M1 3h12v1h-12z" fill="#000"/><path d="M1 4h12l3-3v2l-3 3h-12z" fill="#f6f200"/><path d="M13 3l3-3v1l-3 3z" fill="#000"/><path d="M0 6h13v4h-13z" fill="#c6c6c6"/><path d="M13 6l3-3v4l-3 3z" fill="#7a7a7a"/><path d="M0 5h1v1h-1zM13 6h1v4h-1z" fill="#222"/><path d="M0 10h13v1h-13z" fill="#000"/><path d="M1 8h2v1h-2zM5 8h2v1h-2zM9 8h2v1h-2z" fill="#f01010"/></g></svg>
<div class="t gc" style="left:1196px;top:212px;width:58px;overflow:hidden"><span class="s">- keine -</span></div>
<div class="t gc" style="left:372px;top:231px;width:59px;padding-right:1px;overflow:hidden;display:flex;justify-content:flex-end"><span class="sr" style="flex:none">25/11</span></div>
<div class="t gc" style="left:433px;top:231px;width:122px;overflow:hidden;display:flex;justify-content:center"><span class="sc" style="flex:none">Böswelle, Max</span></div>
<div class="t gc" style="left:559px;top:231px;width:58px;overflow:hidden"><span class="s">Böswelle, Max</span></div>
<div class="t gc" style="left:682px;top:231px;width:62px;overflow:hidden;display:flex;justify-content:center"><span class="sc" style="flex:none">SB</span></div>
<div class="a chk" style="left:862px;top:231px"></div>
<div class="t gc" style="left:884px;top:231px;width:85px;overflow:hidden"><span class="s">24.03.11 15:28</span></div>
<div class="t gc" style="left:973px;top:231px;width:96px;padding-right:1px;overflow:hidden;display:flex;justify-content:flex-end"><span class="sr" style="flex:none">00000700002-00-04.pdf</span></div>
<svg class="a" style="left:1094px;top:231px" width="16" height="11" viewBox="0 0 16 11"><g shape-rendering="crispEdges"><path d="M4 0h12v1l-3 3h-12v-1z" fill="#c9c9c9"/><path d="M4 0h12v1h-12z" fill="#000"/><path d="M4 1l-3 3h-1l3-3z" fill="#000"/><path d="M1 3h12v1h-12z" fill="#000"/><path d="M1 4h12l3-3v2l-3 3h-12z" fill="#f6f200"/><path d="M13 3l3-3v1l-3 3z" fill="#000"/><path d="M0 6h13v4h-13z" fill="#c6c6c6"/><path d="M13 6l3-3v4l-3 3z" fill="#7a7a7a"/><path d="M0 5h1v1h-1zM13 6h1v4h-1z" fill="#222"/><path d="M0 10h13v1h-13z" fill="#000"/><path d="M1 8h2v1h-2zM5 8h2v1h-2zM9 8h2v1h-2z" fill="#f01010"/></g></svg>
<div class="t gc" style="left:1196px;top:231px;width:58px;overflow:hidden"><span class="s">- keine -</span></div>
<div class="t gc" style="left:372px;top:250px;width:59px;padding-right:1px;overflow:hidden;display:flex;justify-content:flex-end"><span class="sr" style="flex:none">1/06</span></div>
<div class="t gc" style="left:433px;top:250px;width:122px;overflow:hidden;display:flex;justify-content:center"><span class="sc" style="flex:none">Bühner ./. ra-micro</span></div>
<div class="t gc" style="left:559px;top:250px;width:58px;overflow:hidden"><span class="s">Bühner, Stefan</span></div>
<div class="t gc" style="left:682px;top:250px;width:62px;overflow:hidden;display:flex;justify-content:center"><span class="sc" style="flex:none">SB</span></div>
<div class="t gc" style="left:748px;top:250px;width:107px;overflow:hidden"><span class="s">2 Stefan Bühner</span></div>
<div class="a chk" style="left:862px;top:250px"></div>
<div class="t gc" style="left:884px;top:250px;width:85px;overflow:hidden"><span class="s">24.03.11 15:28</span></div>
<div class="t gc" style="left:973px;top:250px;width:96px;padding-right:1px;overflow:hidden;display:flex;justify-content:flex-end"><span class="sr" style="flex:none">00000500002-00-04.pdf</span></div>
<svg class="a" style="left:1094px;top:250px" width="16" height="11" viewBox="0 0 16 11"><g shape-rendering="crispEdges"><path d="M4 0h12v1l-3 3h-12v-1z" fill="#c9c9c9"/><path d="M4 0h12v1h-12z" fill="#000"/><path d="M4 1l-3 3h-1l3-3z" fill="#000"/><path d="M1 3h12v1h-12z" fill="#000"/><path d="M1 4h12l3-3v2l-3 3h-12z" fill="#f6f200"/><path d="M13 3l3-3v1l-3 3z" fill="#000"/><path d="M0 6h13v4h-13z" fill="#c6c6c6"/><path d="M13 6l3-3v4l-3 3z" fill="#7a7a7a"/><path d="M0 5h1v1h-1zM13 6h1v4h-1z" fill="#222"/><path d="M0 10h13v1h-13z" fill="#000"/><path d="M1 8h2v1h-2zM5 8h2v1h-2zM9 8h2v1h-2z" fill="#f01010"/></g></svg>
<div class="t gc" style="left:1196px;top:250px;width:58px;overflow:hidden"><span class="s">- keine -</span></div>
<div class="a" style="left:307px;top:266px;width:950px;height:11px;overflow:hidden">
<div class="a chk" style="left:555px;top:3px"></div>
<div class="t gc" style="left:577px;top:3px;width:85px;overflow:hidden"><span class="s">24.03.11 15:28</span></div>
<div class="t gc" style="left:666px;top:3px;width:96px;padding-right:1px;overflow:hidden;display:flex;justify-content:flex-end"><span class="sr" style="flex:none">00000600002-00-04.pdf</span></div>
<svg class="a" style="left:787px;top:3px" width="16" height="11" viewBox="0 0 16 11"><g shape-rendering="crispEdges"><path d="M4 0h12v1l-3 3h-12v-1z" fill="#c9c9c9"/><path d="M4 0h12v1h-12z" fill="#000"/><path d="M4 1l-3 3h-1l3-3z" fill="#000"/><path d="M1 3h12v1h-12z" fill="#000"/><path d="M1 4h12l3-3v2l-3 3h-12z" fill="#f6f200"/><path d="M13 3l3-3v1l-3 3z" fill="#000"/><path d="M0 6h13v4h-13z" fill="#c6c6c6"/><path d="M13 6l3-3v4l-3 3z" fill="#7a7a7a"/><path d="M0 5h1v1h-1zM13 6h1v4h-1z" fill="#222"/><path d="M0 10h13v1h-13z" fill="#000"/><path d="M1 8h2v1h-2zM5 8h2v1h-2zM9 8h2v1h-2z" fill="#f01010"/></g></svg>
</div>
<div class="a" style="left:313px;top:137px;width:0;height:0;border-top:5px solid transparent;border-bottom:5px solid transparent;border-left:9px solid #000"></div>
<div class="a" style="left:307px;top:277px;width:951px;height:16px;background:#f0f0f0"></div>
<div class="a" style="left:307px;top:277px;width:951px;height:1px;background:#e6e6e6"></div>
<div class="a" style="left:313px;top:281px;width:0;height:0;border-top:4px solid transparent;border-bottom:4px solid transparent;border-right:5px solid #4a4a4a"></div>
<div class="a" style="left:1248px;top:281px;width:0;height:0;border-top:4px solid transparent;border-bottom:4px solid transparent;border-left:5px solid #4a4a4a"></div>
<div class="a" style="left:325px;top:277px;width:15px;height:16px;border:1px solid #979797;border-radius:2px;background:linear-gradient(#f3f3f3 0,#e8e8e9 48%,#d9dadb 52%,#cfd0d2 100%);box-shadow:inset 0 0 0 1px #fafafa"></div>
<div class="a" style="left:1258px;top:57px;width:17px;height:220px;background:linear-gradient(90deg,#e4e4e4,#f2f2f2 30%,#f0f0f0)"></div>
<div class="a" style="left:1258px;top:277px;width:17px;height:16px;background:#f4f4f4"></div>
<div class="a" style="left:1263px;top:64px;width:0;height:0;border-left:4px solid transparent;border-right:4px solid transparent;border-bottom:4px solid #505050"></div>
<div class="a" style="left:1263px;top:266px;width:0;height:0;border-left:4px solid transparent;border-right:4px solid transparent;border-top:4px solid #505050"></div>
<div class="a" style="left:1259px;top:159px;width:15px;height:15px;border:1px solid #979797;border-radius:2px;background:linear-gradient(90deg,#f3f3f3 0,#e8e8e9 48%,#d9dadb 52%,#cfd0d2 100%);box-shadow:inset 0 0 0 1px #fafafa"></div>
<!-- preview -->
<div class="a" style="left:306px;top:294px;width:970px;height:6px;background:#f6f6f6"></div>
<div class="a" style="left:1275px;top:294px;width:1px;height:8px;background:#a6a6a6"></div>
<div class="a" id="preview" style="left:306px;top:300px;width:970px;height:428px;background:#808080;border-top:2px solid #696969;border-bottom:2px solid #5f5f5f;border-left:1px solid #6a6a6a;overflow:hidden">
 <div class="a" id="page" style="left:81px;top:1px;width:793px;height:440px;background:#fff;font-family:'Liberation Sans',sans-serif"></div>
</div>
<!-- page content (absolute to body) -->
<svg class="a" style="left:433px;top:351px" width="14" height="15" viewBox="0 0 14 15">
<g stroke="#5f8a86" stroke-width="1.100" fill="#6a9690" stroke-linecap="round">
<path d="M7 13V4"/><path d="M7 1.500 L6 5 L7 7 L8 5z" stroke-width=".5"/>
<path d="M1 5 L4 6.500 L6.500 10 L3.500 9z" stroke-width=".5"/><path d="M13 5 L10 6.500 L7.500 10 L10.500 9z" stroke-width=".5"/>
<path d="M4.500 13.500 L7 11.500 L9.500 13.500" fill="none" stroke-width=".8"/></g></svg>
<div class="t" style="left:450px;top:353px;font-family:'Liberation Serif',serif;font-weight:bold;font-size:8.500px;color:#5a9fe6;transform:scaleX(.84);transform-origin:0 0">Pfefferminzia</div>
<div class="t pv" style="left:958px;top:344px">24. März 2011</div>
<div class="t" style="left:450px;top:406px;font-size:16px;font-weight:bold;line-height:19px;height:19px">Antwort des Versicherungsunternehmens</div>
<div class="t" style="left:451px;top:427px;font-size:10.700px;font-weight:bold">Vorgangsnummer:</div>
<div class="t" style="left:558px;top:427px;font-size:10.700px">2104063</div>
<div class="a dl" style="top:471px"></div>
<div class="t pv" style="left:501px;top:476px">Kanzlei:</div>
<div class="t pv b" style="left:814px;top:476px">Bechtle GmbH</div>
<div class="a dl" style="top:505px"></div>
<div class="t pv" style="left:501px;top:509px">Ihr Aktenzeichen:</div>
<div class="t pv b" style="left:814px;top:509px">test_4/04</div>
<div class="a dl" style="top:540px"></div>
<div class="t pv" style="left:501px;top:546px">Schadennummer:</div>
<div class="t pv b" style="left:814px;top:546px">123-456-2010</div>
<div class="a dl" style="top:577px"></div>
<div class="t pv" style="left:501px;top:581px">Versicherungsscheinnummer:</div>
<div class="t pv b" style="left:814px;top:581px">5674-785-78</div>
<div class="a dl" style="top:612px"></div>
<div class="t pv" style="left:501px;top:616px">Vorname d. Mandanten:</div>
<div class="t pv b" style="left:814px;top:616px">Martin</div>
<div class="a dl" style="top:646px"></div>
<div class="t pv" style="left:501px;top:651px">Nachname d. Mandanten:</div>
<div class="t pv b" style="left:814px;top:651px">Müller</div>
<div class="a dl" style="top:679px"></div>
<div class="t pv" style="left:501px;top:684px">Freitext:</div>
<div class="a pv b" style="left:814px;top:684px;width:300px;height:42px;overflow:hidden;line-height:15px;white-space:nowrap">+++ TEST +++&lt;br/&gt;&lt;br/&gt; Nach eingehender<br>Prüfung Ihrer Anfrage erklärt sich die<br>Pfefferminzia (Test) dazu bereit, die Kosten</div>
<!-- preview vscroll -->
<div class="a" style="left:1259px;top:302px;width:17px;height:424px;background:linear-gradient(90deg,#e3e3e3,#f1f1f1 30%,#f0f0f0)"></div>
<div class="a" style="left:1263px;top:309px;width:0;height:0;border-left:4px solid transparent;border-right:4px solid transparent;border-bottom:5px solid #4a4a4a"></div>
<div class="a" style="left:1263px;top:716px;width:0;height:0;border-left:4px solid transparent;border-right:4px solid transparent;border-top:5px solid #4a4a4a"></div>
<div class="a" style="left:1260px;top:322px;width:15px;height:134px;border:1px solid #979797;border-radius:2px;background:linear-gradient(90deg,#f3f3f3 0,#e8e8e9 48%,#d9dadb 52%,#cfd0d2 100%);box-shadow:inset 0 0 0 1px #fafafa"></div>
<div class="a" style="left:1264px;top:385px;width:7px;height:1px;background:#6a6a6a;box-shadow:0 2px 0 #6a6a6a,0 4px 0 #6a6a6a"></div>
<!-- bottom bar -->
<div class="a" style="left:0;top:728px;width:1280px;height:42px;background:#f0f0f0"></div>
<div class="a" style="left:4px;top:728px;width:300px;height:4px;background:#b3b7cd"></div>
<div class="a" style="left:0;top:728px;width:4px;height:4px;background:#eeeef0"></div>
<div class="a" style="left:1px;top:733px;width:1278px;height:36px;border:1px solid #d3dbe7;border-top:0;border-radius:0 0 4px 4px"></div>
<div class="a" style="left:0;top:769px;width:1280px;height:1px;background:#fbfcfe"></div>
<div class="a" style="left:0;top:732px;width:1280px;height:1px;background:#cfdbe8"></div>
<div class="t" style="left:6px;top:734px;font-size:12.500px"><span class="s">Anzahl Dateien: 16</span></div>
<svg class="a" style="left:8px;top:763px" width="38" height="7" viewBox="0 0 38 7"><circle cx="19" cy="20" r="17.500" fill="#dfe8f2" stroke="#6f9ccc" stroke-width="1.200"/></svg>
<div class="a nb" style="left:304px;top:737px"><svg width="26" height="22" viewBox="0 0 26 22"><path d="M3.500 9v10" stroke="#a9a9a9" stroke-width="1.400"/><path d="M10.500 9v10l-5.500-5z" fill="#a9a9a9"/><g transform="translate(11 4)"><path d="M4.500 .5h10v14h-10z" fill="#f4f4f4" stroke="#a9a9a9"/><path d="M11 15v-3l3.500-3.500v6.500z" fill="#a9a9a9"/><path d="M.5 4.500h10v14h-10z" fill="#fbfbfb" stroke="#a9a9a9"/><path d="M2.500 8h6M2.500 10.500h6M2.500 13h6M2.500 15.500h6" stroke="#a9a9a9" stroke-width="1.200"/><path d="M7.500 19v-2.500h3.500v2.500z" fill="#a9a9a9"/></g></svg></div>
<div class="a nb" style="left:336px;top:737px"><svg width="26" height="22" viewBox="0 0 26 22"><path d="M9.500 9v10l-5.500-5z" fill="#a9a9a9"/><g transform="translate(10 4)"><path d="M4.500 .5h10v14h-10z" fill="#f4f4f4" stroke="#a9a9a9"/><path d="M11 15v-3l3.500-3.500v6.500z" fill="#a9a9a9"/><path d="M.5 4.500h10v14h-10z" fill="#fbfbfb" stroke="#a9a9a9"/><path d="M2.500 8h6M2.500 10.500h6M2.500 13h6M2.500 15.500h6" stroke="#a9a9a9" stroke-width="1.200"/><path d="M7.500 19v-2.500h3.500v2.500z" fill="#a9a9a9"/></g></svg></div>
<div class="a nb" style="left:432px;top:737px"><svg width="26" height="22" viewBox="0 0 26 22"><g transform="translate(3 4)"><path d="M.5 .5h10v14h-10z" fill="#f4f4f4" stroke="#a9a9a9"/><path d="M.5 9l3.500 3.500v3h-3.500z" fill="#a9a9a9"/><path d="M4.500 4.500h10v14h-10z" fill="#fbfbfb" stroke="#a9a9a9"/><path d="M6.500 8h6M6.500 10.500h6M6.500 13h6M6.500 15.500h6" stroke="#a9a9a9" stroke-width="1.200"/><path d="M4 19v-2.500h3.500v2.500z" fill="#a9a9a9"/></g><path d="M19 9v10l5.500-5z" fill="#a9a9a9"/></svg></div>
<div class="a nb" style="left:464px;top:737px"><svg width="26" height="22" viewBox="0 0 26 22"><g transform="translate(2 4)"><path d="M.5 .5h10v14h-10z" fill="#f4f4f4" stroke="#a9a9a9"/><path d="M.5 9l3.500 3.500v3h-3.500z" fill="#a9a9a9"/><path d="M4.500 4.500h10v14h-10z" fill="#fbfbfb" stroke="#a9a9a9"/><path d="M6.500 8h6M6.500 10.500h6M6.500 13h6M6.500 15.500h6" stroke="#a9a9a9" stroke-width="1.200"/><path d="M4 19v-2.500h3.500v2.500z" fill="#a9a9a9"/></g><path d="M18 9v10l5-5z" fill="#a9a9a9"/><path d="M24.500 9v10" stroke="#a9a9a9" stroke-width="1.400"/></svg></div>
<div class="a" style="left:368px;top:742px;width:57px;height:17px;background:#fff;border:1px solid #666;box-shadow:inset 1px 1px 0 #9a9a9a"></div>
<div class="t" style="left:368px;top:744px;width:57px;text-align:center;font-size:12.500px"><span class="sc">1 / 1</span></div>
<div class="a nb on" style="left:514px;top:737px"><svg width="26" height="22" viewBox="0 0 26 22" shape-rendering="crispEdges"><rect x="2.500" y="11.500" width="16" height="9" fill="#ffe88c" stroke="#a87800" stroke-width="1"/><path d="M4.500 14v5M6.500 14v5M8.500 14v5" stroke="#1428e8" stroke-width="1"/><rect x="11.500" y="3.500" width="10" height="15" fill="#fff2a0" stroke="#000" stroke-width="1"/><path d="M14 6.500h5M14 8.500h5M14 10.500h5M14 12.500h5M14 14.500h5M14 16.500h5" stroke="#1428e8" stroke-width="1"/><path d="M3.500 10.500q.5-4.500 4.500-6.500" fill="none" stroke="#1428e8" stroke-width="1.400" shape-rendering="auto"/><path d="M5 2.500h4.500l-2 3.500z" fill="#1428e8"/></svg></div>
<div class="a nb on" style="left:544px;top:737px"><svg width="26" height="22" viewBox="0 0 26 22" shape-rendering="crispEdges"><rect x="5.500" y="11.500" width="16" height="9" fill="#ffe88c" stroke="#a87800" stroke-width="1"/><path d="M15.500 14v5M17.500 14v5M19.500 14v5" stroke="#1428e8" stroke-width="1"/><rect x="2.500" y="3.500" width="10" height="15" fill="#fff2a0" stroke="#000" stroke-width="1"/><path d="M5 6.500h5M5 8.500h5M5 10.500h5M5 12.500h5M5 14.500h5M5 16.500h5" stroke="#1428e8" stroke-width="1"/><path d="M21.500 10.500q-.5-4.500-4.500-6.500" fill="none" stroke="#1428e8" stroke-width="1.400" shape-rendering="auto"/><path d="M19 2.500h-4.500l2 3.500z" fill="#1428e8"/></svg></div>
<div class="a" style="left:1019px;top:735px;width:1px;height:32px;background:#a0a0a0"></div>
<div class="a" style="left:1119px;top:735px;width:1px;height:32px;background:#a0a0a0"></div>
<div class="a" style="left:1199px;top:735px;width:1px;height:32px;background:#a0a0a0"></div>
<div class="t" style="left:1057px;top:746px;font-size:12.500px"><span class="s">Senden an</span></div>
<div class="t" style="left:1159px;top:746px;font-size:12.500px"><span class="s">OK</span></div>
<div class="t" style="left:1225px;top:746px;font-size:12.500px"><span class="s">Abbruch</span></div>
<svg class="a" style="left:1036px;top:745px" width="19" height="19" viewBox="0 0 19 19"><rect x=".5" y=".5" width="18" height="18" rx="3" fill="#0aa040" stroke="#06702a"/><path d="M3.500 9.500h10M9.500 5l4.500 4.500-4.500 4.500" fill="none" stroke="#fff" stroke-width="2.200"/></svg>
<svg class="a" style="left:1139px;top:744px" width="18" height="17" viewBox="0 0 18 17"><path d="M3.200 9.800l3 4.700L16.300 3" fill="none" stroke="#1a30c8" stroke-width="2.600"/><path d="M2.500 8.500l3 4.700L15.500 2" fill="none" stroke="#14c020" stroke-width="3.200"/></svg>
<svg class="a" style="left:1207px;top:744px" width="16" height="17" viewBox="0 0 16 17"><path d="M3 3.500l10 12M13.500 3l-10 12.500" fill="none" stroke="#606060" stroke-width="3"/><path d="M2 2.500l10 12M12.500 2l-10 12.500" fill="none" stroke="#e81010" stroke-width="3"/></svg>
</div>
</body>
</html>
